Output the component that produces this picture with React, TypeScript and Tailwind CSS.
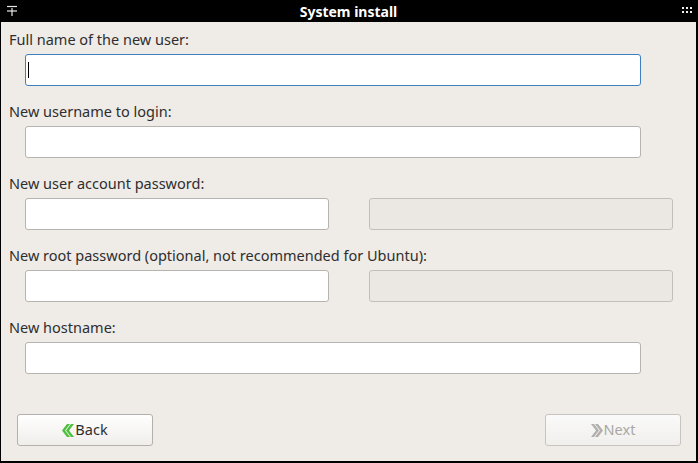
import React from 'react';

const font = { fontFamily: '"Noto Sans", "DejaVu Sans", sans-serif' };

const Field = ({ focused = false }: { focused?: boolean }) => (
  <div
    className={`relative h-[32px] w-[616px] rounded-[3px] border bg-white ${
      focused ? 'border-[#3d7fbf]' : 'border-[#b7b3ae]'
    }`}
  >
    {focused && <div className="absolute left-[2px] top-[7px] h-[16px] w-px bg-black" />}
  </div>
);

const PasswordPair = () => (
  <div className="flex gap-[40px]">
    <div className="h-[32px] w-[304px] rounded-[3px] border border-[#b7b3ae] bg-white" />
    <div className="h-[32px] w-[304px] rounded-[3px] border border-[#c2beb9] bg-[#ebe8e4]" />
  </div>
);

const Group = ({ label, children }: { label: string; children: React.ReactNode }) => (
  <div className="flex flex-col">
    <div className="h-[20px] pl-[8px] text-[14.5px] leading-[19px] text-[#2e2e2e]">{label}</div>
    <div className="mt-[4px] pl-[24px]">{children}</div>
  </div>
);

const Chevrons = ({ dir, color }: { dir: 'left' | 'right'; color: string }) => (
  <svg width="12" height="13" viewBox="0 0 12 13" className="mr-[1px]">
    {dir === 'left' ? (
      <g fill={color}>
        <polygon points="5,0 8,0 3,6.5 8,13 5,13 0,6.5" />
        <polygon points="9,0 12,0 7,6.5 12,13 9,13 4,6.5" />
      </g>
    ) : (
      <g fill={color}>
        <polygon points="0,0 3,0 8,6.5 3,13 0,13 5,6.5" />
        <polygon points="4,0 7,0 12,6.5 7,13 4,13 9,6.5" />
      </g>
    )}
  </svg>
);

export default function App() {
  return (
    <div
      className="flex h-[463px] w-[698px] flex-col border-b-2 border-l border-r-2 border-black bg-[#efebe7]"
      style={font}
    >
      <div className="relative flex h-[22px] shrink-0 items-center justify-center bg-black">
        <svg width="12" height="12" viewBox="0 0 12 12" className="absolute left-[5px] top-[5px]">
          <g stroke="#e8e8e8" strokeWidth="1.2">
            <line x1="1" y1="1.5" x2="11" y2="1.5" />
            <line x1="1" y1="6" x2="11" y2="6" />
            <line x1="6" y1="3" x2="6" y2="11" />
          </g>
        </svg>
        <span className="text-[14px] font-bold text-white">System install</span>
        <svg width="10" height="8" viewBox="0 0 10 8" className="absolute right-[4px] top-[7px]">
          <g fill="#f0f0f0">
            <rect x="0" y="0" width="2" height="2" />
            <rect x="4" y="0" width="2" height="2" />
            <rect x="8" y="0" width="2" height="2" />
            <rect x="0" y="4" width="2" height="2" />
            <rect x="4" y="4" width="2" height="2" />
            <rect x="8" y="4" width="2" height="2" />
          </g>
        </svg>
      </div>

      <div className="flex flex-col gap-[16px] pt-[8px]">
        <Group label="Full name of the new user:">
          <Field focused />
        </Group>
        <Group label="New username to login:">
          <Field />
        </Group>
        <Group label="New user account password:">
          <PasswordPair />
        </Group>
        <Group label="New root password (optional, not recommended for Ubuntu):">
          <PasswordPair />
        </Group>
        <Group label="New hostname:">
          <Field />
        </Group>
      </div>

      <div className="mt-[40px] flex justify-between pl-[16px] pr-[15px]">
        <button className="flex h-[32px] w-[136px] items-center justify-center rounded-[3px] border border-[#b4b0ab] bg-gradient-to-b from-white to-[#f0eeeb] text-[14.5px] text-[#2e2e2e]">
          <Chevrons dir="left" color="#4cbf3c" />
          Back
        </button>
        <button className="flex h-[32px] w-[136px] items-center justify-center rounded-[3px] border border-[#c8c4bf] bg-gradient-to-b from-[#fafafa] to-[#f1efec] text-[14.5px] text-[#a9a7a4]">
          <Chevrons dir="right" color="#b2b0ad" />
          Next
        </button>
      </div>
    </div>
  );
}
